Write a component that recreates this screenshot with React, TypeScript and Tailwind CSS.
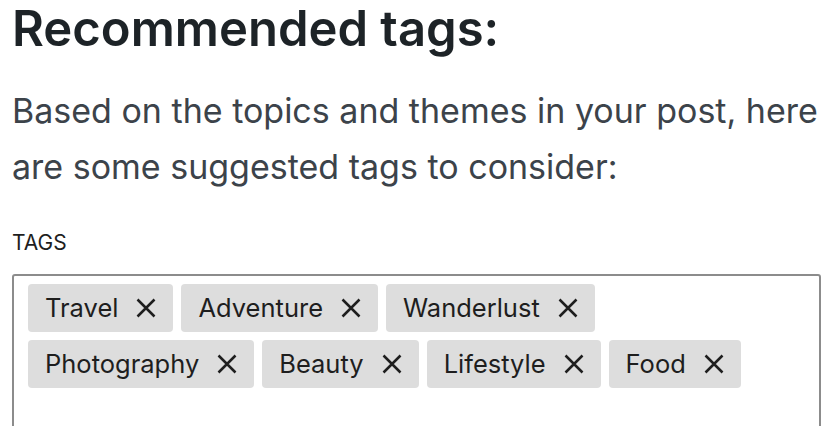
import React from "react";

const tags = [
  "Travel",
  "Adventure",
  "Wanderlust",
  "Photography",
  "Beauty",
  "Lifestyle",
  "Food",
];

const CloseIcon = () => (
  <svg viewBox="0 0 24 24" className="h-[24px] w-[24px]" fill="none">
    <path d="M3.5 3.5l17 17M20.5 3.5l-17 17" stroke="#1e1e1e" strokeWidth="2.5" />
  </svg>
);

const Tag = ({ label }: { label: string }) => (
  <span className="flex h-12 items-center gap-[16px] rounded-[4px] bg-[#dddddd] pl-[17px] pr-[15px] text-[25.5px] text-[#1e1e1e]">
    <span>{label}</span>
    <button type="button" aria-label={`Remove ${label}`} className="flex items-center">
      <CloseIcon />
    </button>
  </span>
);

export default function App() {
  return (
    <div className="h-screen w-full overflow-hidden bg-white px-3 font-['Inter','Liberation_Sans',sans-serif]">
      <h1 className="text-[49px] font-semibold leading-[58px] text-[#1d2327]">
        Recommended tags:
      </h1>
      <p className="mt-[25px] text-[34px] leading-[56px] text-[#3c434a]">
        Based on the topics and themes in your post, here are some suggested tags to consider:
      </p>
      <label className="mt-[36px] block text-[21px] uppercase leading-6 text-[#1e1e1e]">
        Tags
      </label>
      <div className="mt-[19px] mr-[1px] h-[200px] rounded-[3px] border-2 border-[#8c8c8c] px-[14px] py-2">
        <div className="flex flex-wrap gap-2">
          {tags.map((t) => (
            <Tag key={t} label={t} />
          ))}
        </div>
      </div>
    </div>
  );
}
